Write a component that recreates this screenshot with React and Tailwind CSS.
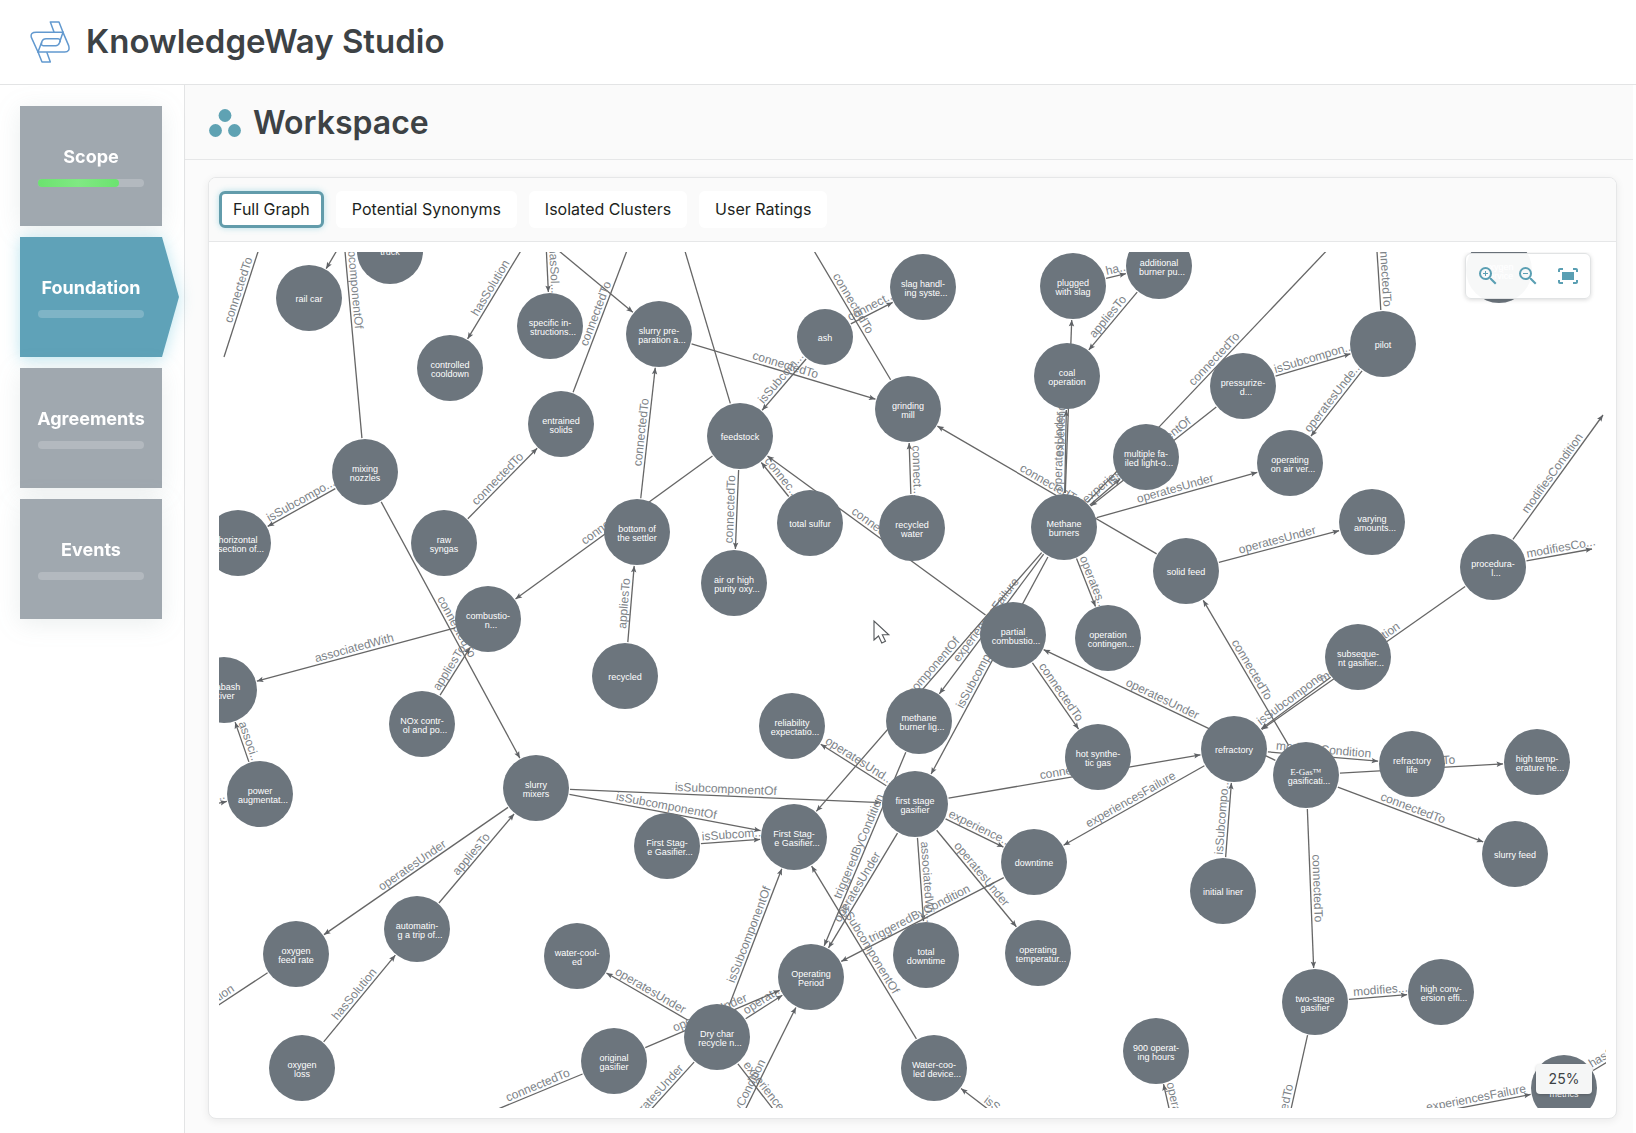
import { useState } from 'react';
import { MdZoomIn, MdZoomOut, MdFitScreen } from 'react-icons/md';

const STAGES = [
  { name: 'Scope', progress: 76 },
  { name: 'Foundation', progress: 0 },
  { name: 'Agreements', progress: 0 },
  { name: 'Events', progress: 0 },
];

const TABS = ['Full Graph', 'Potential Synonyms', 'Isolated Clusters', 'User Ratings'];

// current viewport offset of the graph
const PAN = { x: -219, y: -252 };
const NODE_RADIUS = 33;

// id: [x, y, label lines, radius]
const NODES = {
  railCar: [309, 298, ['rail car']],
  truck: [390, 251, ['truck']],
  controlled: [450, 368, ['controlled', 'cooldown']],
  specific: [550, 326, ['specific in-', 'structions...']],
  slurryPrep: [659, 334, ['slurry pre-', 'paration a...']],
  entrained: [561, 424, ['entrained', 'solids']],
  nozzles: [365, 472, ['mixing', 'nozzles']],
  horizontal: [238, 543, ['horizontal', 'section of...']],
  syngas: [444, 543, ['raw', 'syngas']],
  settler: [637, 532, ['bottom of', 'the settler']],
  ash: [825, 337, ['ash'], 28],
  slag: [923, 287, ['slag handl-', 'ing syste...']],
  plugged: [1073, 286, ['plugged', 'with slag']],
  mill: [908, 409, ['grinding', 'mill']],
  feedstock: [740, 436, ['feedstock']],
  coalOp: [1067, 376, ['coal', 'operation']],
  sulfur: [810, 523, ['total sulfur']],
  recycledWater: [912, 528, ['recycled', 'water']],
  burners: [1064, 527, ['Methane', 'burners']],
  airPurity: [734, 583, ['air or high', 'purity oxy...']],
  additional: [1159, 266, ['additional', 'burner pu...']],
  pilot: [1383, 344, ['pilot']],
  pressurized: [1243, 386, ['pressurize-', 'd...']],
  multiple: [1146, 457, ['multiple fa-', 'iled light-o...']],
  onAir: [1290, 463, ['operating', 'on air ver...']],
  varying: [1372, 522, ['varying', 'amounts...']],
  solidFeed: [1186, 571, ['solid feed']],
  procedural: [1493, 567, ['procedura-', 'l...']],
  oxygenService: [1499, 270, ['oxygen', 'service']],
  combustion: [488, 619, ['combustio-', 'n...']],
  wabash: [224, 690, ['Wabash', 'River']],
  power: [260, 794, ['power', 'augmentat...']],
  nox: [422, 724, ['NOx contr-', 'ol and po...']],
  mixers: [536, 788, ['slurry', 'mixers']],
  stageA: [667, 846, ['First Stag-', 'e Gasifier...']],
  recycled: [625, 676, ['recycled']],
  partial: [1013, 635, ['partial', 'combustio...']],
  contingency: [1108, 638, ['operation', 'contingen...']],
  burnerLight: [919, 721, ['methane', 'burner lig...']],
  reliability: [792, 726, ['reliability', 'expectatio...']],
  gasifier: [915, 804, ['first stage', 'gasifier']],
  stageB: [794, 837, ['First Stag-', 'e Gasifier...']],
  hotGas: [1098, 757, ['hot synthe-', 'tic gas']],
  downtime: [1034, 862, ['downtime']],
  subsequent: [1358, 657, ['subseque-', 'nt gasifier...']],
  refractory: [1234, 749, ['refractory']],
  egas: [1306, 775, ['E-Gas™', 'gasificati...']],
  refractoryLife: [1412, 764, ['refractory', 'life']],
  highTemp: [1537, 762, ['high temp-', 'erature he...']],
  slurryFeed: [1515, 854, ['slurry feed']],
  liner: [1223, 891, ['initial liner']],
  twoStage: [1315, 1002, ['two-stage', 'gasifier']],
  highConv: [1441, 992, ['high conv-', 'ersion effi...']],
  hours: [1156, 1051, ['900 operat-', 'ing hours']],
  metrics: [1564, 1088, ['failure', 'metrics']],
  feedRate: [296, 954, ['oxygen', 'feed rate']],
  automating: [417, 929, ['automatin-', 'g a trip of...']],
  waterCooled: [577, 956, ['water-cool-', 'ed']],
  oxygenLoss: [302, 1068, ['oxygen', 'loss']],
  original: [614, 1061, ['original', 'gasifier']],
  period: [811, 977, ['Operating', 'Period']],
  totalDowntime: [926, 955, ['total', 'downtime']],
  temperature: [1038, 953, ['operating', 'temperatur...']],
  dryChar: [717, 1037, ['Dry char', 'recycle n...']],
  device: [934, 1068, ['Water-coo-', 'led device...']],
};

// [source, target, label] - a point stands for a node outside the viewport
const EDGES = [
  [[266, 227], [224, 357], 'connectedTo', true],
  [[350, 228], 'railCar', ''],
  ['nozzles', [333, 119], 'isSubcomponentOf'],
  [[525, 244], 'controlled', 'hasSolution'],
  [[546, 243], 'specific', 'hasSol...'],
  [[500, 202], 'slurryPrep', ''],
  ['entrained', [631, 240], 'connectedTo'],
  ['syngas', 'entrained', 'connectedTo'],
  ['nozzles', 'horizontal', 'isSubcompo...'],
  ['nozzles', 'mixers', 'connectedTo'],
  ['settler', 'slurryPrep', 'connectedTo'],
  ['feedstock', 'combustion', 'connectedTo'],
  ['recycled', 'settler', 'appliesTo'],
  ['feedstock', [640, 100], ''],
  ['slurryPrep', 'mill', 'connectedTo'],
  ['ash', 'feedstock', 'isSubcom...'],
  ['ash', 'slag', 'connect...'],
  ['mill', [804, 234], 'connectedTo'],
  ['recycledWater', 'mill', 'connect...'],
  ['sulfur', 'feedstock', 'connec...'],
  ['partial', 'feedstock', 'connectedTo'],
  ['feedstock', 'airPurity', 'connectedTo'],
  ['solidFeed', 'mill', 'connectedTo'],
  ['burners', 'coalOp', 'operatesUnder'],
  ['burners', 'plugged', 'experiencesFailure'],
  ['plugged', 'additional', 'ha...'],
  ['additional', 'coalOp', 'appliesTo'],
  ['burners', 'multiple', 'experie...'],
  ['pressurized', 'burners', 'isSubcomponentOf'],
  ['burners', [1351, 225], 'connectedTo'],
  ['burners', 'onAir', 'operatesUnder'],
  ['pressurized', 'pilot', 'isSubcompon...'],
  ['pilot', 'onAir', 'operatesUnde...'],
  ['pilot', [1376, 236], 'connectedTo'],
  ['solidFeed', 'varying', 'operatesUnder'],
  ['procedural', [1603, 415], 'modifiesCondition'],
  ['procedural', [1592, 549], 'modifiesCo...'],
  ['burners', 'contingency', 'operates...'],
  ['burners', 'burnerLight', 'experiencesFailure'],
  ['burners', 'stageB', 'isSubcomponentOf'],
  ['burners', 'gasifier', 'isSubcomponentOf'],
  ['partial', 'hotGas', 'connectedTo'],
  ['egas', 'partial', 'operatesUnder'],
  ['gasifier', 'refractory', 'connectedTo'],
  ['gasifier', 'reliability', 'operatesUnd...'],
  ['mixers', 'gasifier', 'isSubcomponentOf'],
  ['mixers', 'stageB', 'isSubcomponentOf'],
  ['stageA', 'stageB', 'isSubcom...'],
  ['burnerLight', 'period', 'triggeredByCondition'],
  ['gasifier', 'period', 'operatesUnder'],
  ['gasifier', 'totalDowntime', 'associatedWi...'],
  ['gasifier', 'temperature', 'operatesUnder'],
  ['gasifier', 'downtime', 'experience...'],
  ['refractory', 'downtime', 'experiencesFailure'],
  ['downtime', 'period', 'triggeredByCondition'],
  ['device', 'stageB', 'isSubcomponentOf'],
  ['dryChar', 'stageB', 'isSubcomponentOf'],
  ['dryChar', 'period', 'operat...'],
  ['original', 'period', 'operatesUnder'],
  ['dryChar', 'waterCooled', 'operatesUnder'],
  ['dryChar', [625, 1138], 'operatesUnder'],
  ['dryChar', [805, 1150], 'experiencesFailure'],
  [[691, 1219], 'period', 'triggeredByCondition'],
  [[1018, 1132], 'device', 'isS...'],
  [[1181, 1161], 'hours', 'operatesUnder'],
  ['twoStage', [1270, 1203], 'connectedTo'],
  ['twoStage', 'highConv', 'modifies...'],
  ['egas', 'twoStage', 'connectedTo'],
  ['egas', 'slurryFeed', 'connectedTo'],
  ['egas', 'highTemp', 'connectedTo'],
  ['egas', 'solidFeed', 'connectedTo'],
  ['refractory', 'refractoryLife', 'modifiesCondition'],
  ['liner', 'refractory', 'isSubcompo...'],
  ['subsequent', 'refractory', 'isSubcompone...'],
  ['procedural', 'refractory', 'modifiesCondition'],
  [[1424, 1115], 'metrics', 'experiencesFailure'],
  ['metrics', [1647, 1038], 'hasSolution'],
  ['feedRate', [126, 1066], 'modifiesCondition'],
  ['mixers', 'feedRate', 'operatesUnder'],
  ['automating', 'mixers', 'appliesTo'],
  ['oxygenLoss', 'automating', 'hasSolution'],
  ['original', [498, 1109], 'connectedTo', true],
  ['nox', 'combustion', 'appliesTo'],
  ['combustion', 'wabash', 'associatedWith'],
  ['power', 'wabash', 'associ...'],
  [[197, 808], 'power', 'ha...'],
];

const resolve = (end) =>
  Array.isArray(end)
    ? { x: end[0], y: end[1], r: 0 }
    : { x: NODES[end][0], y: NODES[end][1], r: (NODES[end][3] || NODE_RADIUS) + 1 };

// shortened labels are centered without their last dots
const labelShift = (text) => (text.endsWith('...') ? 3 : 0);

const Edge = ({ edge }) => {
  const [source, target, label, plain] = edge;
  const a = resolve(source);
  const b = resolve(target);
  const dx = b.x - a.x;
  const dy = b.y - a.y;
  const len = Math.hypot(dx, dy);
  const x1 = a.x + (dx / len) * a.r;
  const y1 = a.y + (dy / len) * a.r;
  const x2 = b.x - (dx / len) * b.r;
  const y2 = b.y - (dy / len) * b.r;

  // keep the label readable from left to right
  let angle = (Math.atan2(dy, dx) * 180) / Math.PI;
  if (angle > 90) angle -= 180;
  if (angle < -90) angle += 180;

  return (
    <g>
      <line
        x1={x1}
        y1={y1}
        x2={x2}
        y2={y2}
        stroke="#666666"
        strokeWidth="1.3"
        markerEnd={plain ? undefined : 'url(#arrow)'}
      />
      {label && (
        <text
          transform={`translate(${(x1 + x2) / 2} ${(y1 + y2) / 2}) rotate(${angle})`}
          x={labelShift(label)}
          y="-3"
          textAnchor="middle"
          fontSize="12"
          fill="#7d8388"
        >
          {label}
        </text>
      )}
    </g>
  );
};

const Node = ({ node }) => {
  const [x, y, lines, radius] = node;
  const top = lines.length === 1 ? y + 4 : y;
  return (
    <g>
      <circle cx={x} cy={y} r={radius || NODE_RADIUS} fill="#6c757d" />
      {lines.map((line, i) => (
        <text
          key={line}
          x={x + labelShift(line)}
          y={top + i * 9}
          textAnchor="middle"
          fontSize="9"
          fill="#ffffff"
          fontFamily={line.includes('™') ? 'Liberation Serif, serif' : undefined}
        >
          {line}
        </text>
      ))}
    </g>
  );
};

const Graph = () => (
  <svg
    className="block h-full w-full"
    fontFamily="Liberation Sans, Arial, sans-serif"
    role="img"
    aria-label="Knowledge graph"
  >
    <defs>
      <marker id="arrow" markerUnits="userSpaceOnUse" markerWidth="8" markerHeight="8" refX="7" refY="4" orient="auto">
        <path d="M0.5 1.3 L7 4 L0.5 6.7 L1.8 4 Z" fill="#5f6266" />
      </marker>
    </defs>
    <g transform={`translate(${PAN.x} ${PAN.y})`}>
      {EDGES.map((edge, i) => (
        <Edge key={i} edge={edge} />
      ))}
      {Object.entries(NODES).map(([id, node]) => (
        <Node key={id} node={node} />
      ))}
      <path
        d="M874 621 V640 L878.5 636 L881.8 643 L885.5 641.3 L882.3 634.8 H888.8 Z"
        fill="#ffffff"
        stroke="#55585b"
        strokeWidth="1.1"
      />
    </g>
  </svg>
);

const Logo = () => (
  <svg
    className="h-[42px] w-10"
    viewBox="91 64 120 126"
    fill="none"
    stroke="#6299cf"
    strokeWidth="4.5"
    strokeLinejoin="round"
    strokeLinecap="round"
    aria-hidden="true"
  >
    <path d="M163 97 L152 67 H178 L190 98 L207 138 Q212 157 195 157 H115" />
    <path d="M190 98 H110 Q91 98 95 113 L115 157 L127 187 H152 L142 159" />
    <path d="M115 157 L127 125 Q130 117 139 117 H175 Q184 118 181 126" />
    <path d="M190 98 L179 130 Q176 138 168 138 H131 Q123 138 126 129" />
  </svg>
);

const StageButton = ({ stage, active, onSelect }) => (
  <div
    className={
      active
        ? 'drop-shadow-[0_2px_8px_rgba(90,190,215,0.4)]'
        : 'drop-shadow-[0_4px_12px_rgba(90,120,120,0.13)]'
    }
  >
    <button
      type="button"
      onClick={() => onSelect(stage.name)}
      className={`flex h-30 flex-col justify-center pb-[2px] text-white ${
        active
          ? 'w-[159px] bg-[#5fa2b8] [clip-path:polygon(0_0,142px_0,100%_50%,142px_100%,0_100%)]'
          : 'w-[142px] bg-[#a0a8af]'
      }`}
    >
      <span className="block w-[142px] text-center text-lg font-bold">{stage.name}</span>
      <span className="mt-2 ml-[18px] block h-2 w-[106px] rounded-full bg-white/20">
        {stage.progress > 0 && (
          <span
            className="block h-2 rounded-full bg-linear-to-r from-[#6be36f] via-[#80e883] to-[#6be36f]"
            style={{ width: `${stage.progress}%` }}
          />
        )}
      </span>
    </button>
  </div>
);

const App = () => {
  const [stage, setStage] = useState('Foundation');
  const [tab, setTab] = useState('Full Graph');

  return (
    <div className="flex min-h-screen flex-col bg-white font-['Inter',sans-serif] text-[#3d4245]">
      <header className="flex h-[85px] items-center gap-4 border-b border-[#e3e4e5] pl-[30px]">
        <Logo />
        <h1 className="text-[33px] font-semibold">KnowledgeWay Studio</h1>
      </header>

      <div className="flex flex-1">
        <nav className="flex w-[185px] shrink-0 flex-col gap-[11px] border-r border-[#e3e4e5] pt-[21px] pl-5">
          {STAGES.map((s) => (
            <StageButton key={s.name} stage={s} active={s.name === stage} onSelect={setStage} />
          ))}
        </nav>

        <main className="mr-[3px] flex min-w-0 flex-1 flex-col bg-[#fbfbfb]">
          <div className="flex h-[75px] items-center gap-3 border-b border-[#e6e7e8] bg-[#fafafa] pt-[2px] pl-6">
            <svg className="h-7 w-8" viewBox="0 0 32 28" fill="#5fa2b3" aria-hidden="true">
              <circle cx="16" cy="6.5" r="6.4" />
              <circle cx="6.5" cy="21.5" r="6.4" />
              <circle cx="25.5" cy="21.5" r="6.4" />
            </svg>
            <h2 className="text-[32px] font-semibold">Workspace</h2>
          </div>

          <div className="flex flex-1 flex-col pt-[17px] pr-4 pb-[14px] pl-[23px]">
            <section className="flex flex-1 flex-col overflow-hidden rounded-lg border border-[#e6e7e8] bg-white shadow-[0_2px_8px_rgba(0,0,0,0.07)]">
              <div className="flex gap-3 border-b border-[#e6e7e8] bg-[#fafafa] px-[10px] py-[13px]">
                {TABS.map((name) => (
                  <button
                    key={name}
                    type="button"
                    onClick={() => setTab(name)}
                    className={`h-[37px] rounded-md bg-white pb-[2px] text-base text-[#1c1f21] ${
                      name === tab
                        ? 'border-3 border-[#629cab] px-[11px] shadow-[0_0_6px_rgba(95,190,210,0.45)]'
                        : 'px-4'
                    }`}
                  >
                    {name}
                  </button>
                ))}
              </div>

              <div className="flex flex-1 p-[10px]">
                <div className="relative min-w-0 flex-1 overflow-hidden">
                  <div className="absolute inset-0">
                    <Graph />
                  </div>
                  <div className="absolute top-px right-[15px] flex h-[46px] items-center gap-4 rounded-md border border-[#e1e3e4] bg-white/95 px-[10px] text-[#5a9fb3] shadow-[0_1px_4px_rgba(0,0,0,0.15)]">
                    <button type="button" aria-label="Zoom in">
                      <MdZoomIn size={24} />
                    </button>
                    <button type="button" aria-label="Zoom out">
                      <MdZoomOut size={24} />
                    </button>
                    <button type="button" aria-label="Fit to screen">
                      <MdFitScreen size={24} />
                    </button>
                  </div>
                  <div className="absolute right-[14px] bottom-[14px] flex h-[30px] w-14 items-center justify-center rounded bg-[#f5f6f6] text-sm shadow-[0_1px_3px_rgba(0,0,0,0.2)]">
                    25%
                  </div>
                </div>
              </div>
            </section>
          </div>
        </main>
      </div>
    </div>
  );
};

export default App;
